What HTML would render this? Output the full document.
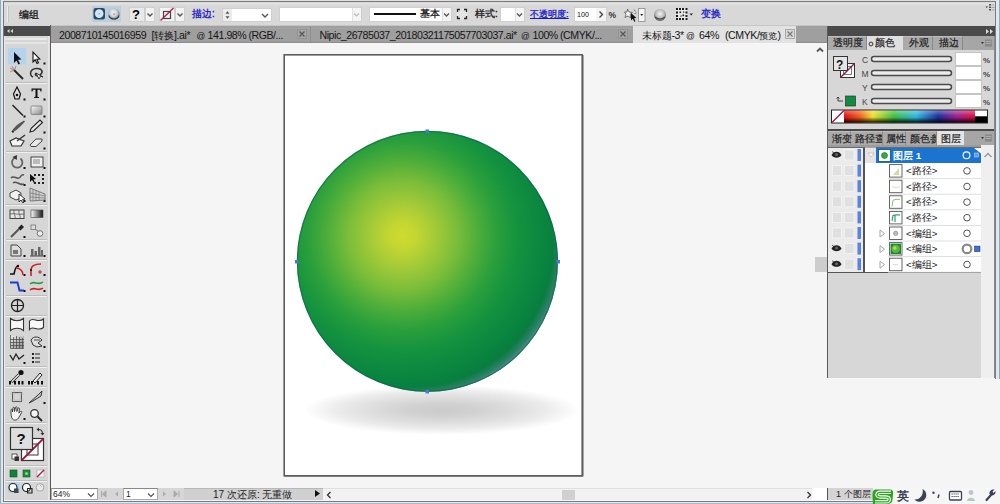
<!DOCTYPE html>
<html><head><meta charset="utf-8">
<style>
*{margin:0;padding:0;box-sizing:border-box}
html,body{width:1000px;height:504px;overflow:hidden;background:#f5f5f5;font-family:"Liberation Sans",sans-serif;position:relative}
.a{position:absolute}
.t{position:absolute;white-space:nowrap;line-height:1}
.tb{top:30.2px;font-size:10.6px;letter-spacing:-0.45px;color:#151515}
</style></head><body>
<!-- window frame -->
<div class="a" style="left:0;top:0;width:1000px;height:504px;background:#dfe8f0"></div>
<div class="a" style="left:3px;top:0;width:993px;height:1px;background:#dedede"></div>
<div class="a" style="left:0;top:0;width:1px;height:504px;background:#94aabd"></div>
<div class="a" style="left:999px;top:0;width:1px;height:379px;background:#94aabd"></div>
<div class="a" style="left:0;top:503px;width:1000px;height:1px;background:#a8bccc"></div>
<div class="a" style="left:3px;top:1px;width:993px;height:501px;background:#7c7c7c"></div>
<!-- canvas bg -->
<div class="a" style="left:4px;top:2px;width:991px;height:498.5px;background:#f5f5f5"></div>
<div class="a" style="left:995px;top:379px;width:5px;height:109px;background:#f5f5f5"></div>
<!-- control bar -->
<div class="a" style="left:4px;top:2px;width:991px;height:24px;background:#d8d8d8"></div>
<div class="a" style="left:4px;top:3px;width:991px;height:2px;background:#e0e0e0"></div>
<div class="a" style="left:4px;top:25px;width:991px;height:1px;background:#c6c6c6"></div>


<!-- control bar contents -->
<div class="a" style="left:7px;top:6px;width:2px;height:16px;background:#ececec;border-right:1px solid #c4c4c4"></div>
<div class="t" style="left:19px;top:9.5px;font-size:9.5px;color:#1a1a1a;-webkit-text-stroke:0.3px #1a1a1a">编组</div>
<div class="a" style="left:92px;top:6px;width:29px;height:16px;background:#b9d0e3"></div>
<svg class="a" style="left:92px;top:6px" width="30" height="16" viewBox="0 0 30 16">
<defs><radialGradient id="b2" cx="0.45" cy="0.4" r="0.6"><stop offset="0" stop-color="#f8f8f8"/><stop offset="0.55" stop-color="#d0d0d0"/><stop offset="1" stop-color="#6a6a6a"/></radialGradient></defs>
<rect x="1.5" y="2" width="11.5" height="11.5" rx="2.2" fill="#2e4866"/>
<circle cx="7.2" cy="7.6" r="4.3" fill="#d4e6f6"/>
<circle cx="7.2" cy="7.8" r="0.8" fill="#7a9ab0"/>
<circle cx="22" cy="8" r="5.6" fill="url(#b2)"/>
<path d="M16.8 9.5 A5.6 5.6 0 0 0 27.2 9.5" fill="none" stroke="#3a3a3a" stroke-width="1.1"/>
<circle cx="22" cy="8" r="1.2" fill="#b8b8b8"/>
</svg>
<div class="a" style="left:129px;top:7px;width:16px;height:15px;background:#e9e9e9;border:1px solid #cfcfcf"></div>
<div class="t" style="left:132px;top:8px;font-size:13px;font-weight:bold;color:#000">?</div>
<div class="a" style="left:145px;top:7px;width:10px;height:15px;background:#f2f2f2;border:1px solid #cfcfcf"></div>
<svg class="a" style="left:145px;top:7px" width="10" height="15"><path d="M2.5 6.5 L5 9 L7.5 6.5" fill="none" stroke="#555" stroke-width="1.4"/></svg>
<div class="a" style="left:159px;top:7px;width:16px;height:15px;background:#f4f4f4;border:1px solid #cfcfcf"></div>
<svg class="a" style="left:159px;top:7px" width="16" height="15"><rect x="4.5" y="4.5" width="7" height="7" fill="none" stroke="#444" stroke-width="1.2"/><path d="M1.5 13.5 L14.5 1" stroke="#b0204a" stroke-width="1.4"/></svg>
<div class="a" style="left:175px;top:7px;width:10px;height:15px;background:#f2f2f2;border:1px solid #cfcfcf"></div>
<svg class="a" style="left:175px;top:7px" width="10" height="15"><path d="M2.5 6.5 L5 9 L7.5 6.5" fill="none" stroke="#555" stroke-width="1.4"/></svg>
<div class="t" style="left:192px;top:9px;font-size:10px;color:#1a1ac4;-webkit-text-stroke:0.3px #1a1ac4">描边:</div>
<div class="a" style="left:222px;top:8px;width:50px;height:14px;background:#fff;border:1px solid #cfcfcf"></div>
<div class="a" style="left:223px;top:9px;width:9px;height:12px;background:#ececec"></div>
<svg class="a" style="left:223px;top:9px" width="9" height="12"><path d="M2.5 4.8 L4.5 2.3 L6.5 4.8 Z M2.5 7.2 L4.5 9.7 L6.5 7.2 Z" fill="#555"/></svg>
<svg class="a" style="left:260px;top:9px" width="10" height="12"><path d="M2 5 L5 8 L8 5" fill="none" stroke="#555" stroke-width="1.4"/></svg>
<div class="a" style="left:279px;top:7px;width:83px;height:15px;background:#fff;border:1px solid #cfcfcf"></div>
<div class="a" style="left:352px;top:8px;width:9px;height:13px;background:#f4f4f4;border-left:1px solid #e0e0e0"></div>
<svg class="a" style="left:352px;top:8px" width="9" height="13"><path d="M2 5.5 L4.5 8 L7 5.5" fill="none" stroke="#bbb" stroke-width="1.2"/></svg>
<div class="a" style="left:369px;top:7px;width:83px;height:15px;background:#fff;border:1px solid #cfcfcf"></div>
<div class="a" style="left:374px;top:13px;width:42px;height:2px;background:#111"></div>
<div class="t" style="left:420px;top:9px;font-size:10px;color:#1a1a1a;-webkit-text-stroke:0.3px #1a1a1a">基本</div>
<div class="a" style="left:442px;top:8px;width:9px;height:13px;background:#f4f4f4;border-left:1px solid #e0e0e0"></div>
<svg class="a" style="left:442px;top:8px" width="9" height="13"><path d="M2 5.5 L4.5 8 L7 5.5" fill="none" stroke="#555" stroke-width="1.3"/></svg>
<svg class="a" style="left:456px;top:8px" width="12" height="12"><rect x="0.5" y="0.5" width="11" height="11" fill="#ececec" opacity="0.6"/><path d="M1.5 4 L1.5 1.5 L4 1.5 M8 1.5 L10.5 1.5 L10.5 4 M10.5 8 L10.5 10.5 L8 10.5 M4 10.5 L1.5 10.5 L1.5 8" fill="none" stroke="#222" stroke-width="1.3"/></svg>
<div class="t" style="left:475px;top:9px;font-size:10px;color:#1a1a1a;-webkit-text-stroke:0.3px #1a1a1a">样式:</div>
<div class="a" style="left:500px;top:7px;width:25px;height:15px;background:#fff;border:1px solid #cfcfcf"></div>
<div class="a" style="left:515px;top:8px;width:9px;height:13px;background:#f4f4f4;border-left:1px solid #e0e0e0"></div>
<svg class="a" style="left:515px;top:8px" width="9" height="13"><path d="M2 5.5 L4.5 8 L7 5.5" fill="none" stroke="#555" stroke-width="1.3"/></svg>
<div class="t" style="left:530px;top:9px;font-size:9.4px;color:#1a1ac4;-webkit-text-stroke:0.3px #1a1ac4;text-decoration:underline">不透明度:</div>
<div class="a" style="left:574px;top:7px;width:33px;height:15px;background:#fff;border:1px solid #cfcfcf"></div>
<div class="t" style="left:577px;top:11px;font-size:7.2px;color:#111">100</div>
<div class="a" style="left:596px;top:8px;width:10px;height:13px;background:#f4f4f4"></div>
<svg class="a" style="left:596px;top:8px" width="10" height="13"><path d="M3.5 3.5 L6.5 6.5 L3.5 9.5" fill="none" stroke="#444" stroke-width="1.4"/></svg>
<div class="t" style="left:608.5px;top:10.5px;font-size:8.5px;font-weight:bold;color:#333">%</div>
<svg class="a" style="left:624px;top:7px" width="22" height="16">
<path d="M3.5 2 L5 5 L8.5 5.5 L6 7.5 L7 11 L4 9 L1 10.5 L2 7.5 L0.5 5 L3 5 Z" fill="#f4f4f4" stroke="#555" stroke-width="0.8"/>
<path d="M7 6 L7 13.5 L8.8 11.8 L10.3 14.8 L11.5 14.2 L10 11.2 L12.5 11 Z" fill="#111"/>
<path d="M10 2.5 L11.5 4.5 M12.5 6 L10.5 6.5" stroke="#666" stroke-width="0.9"/>
<rect x="14.5" y="1.5" width="6.5" height="13" fill="#f4f4f4" stroke="#8a8a8a" stroke-width="0.8"/><path d="M16.2 7 L19.3 7 L17.75 9 Z" fill="#222"/>
</svg>
<svg class="a" style="left:653px;top:8px" width="14" height="14"><defs><radialGradient id="gl" cx="0.5" cy="0.4" r="0.6"><stop offset="0" stop-color="#f4f4f4"/><stop offset="0.6" stop-color="#bbb"/><stop offset="1" stop-color="#555"/></radialGradient></defs><circle cx="7" cy="7" r="6" fill="url(#gl)"/><path d="M2 9 Q7 13 12 9" fill="none" stroke="#444" stroke-width="1.2"/></svg>
<svg class="a" style="left:675px;top:7px" width="20" height="15">
<rect x="1" y="1" width="11.5" height="12" fill="#e8e8e8"/>
<g fill="#1a1a1a"><rect x="1" y="1" width="2" height="2"/><rect x="4" y="1" width="2" height="2"/><rect x="7" y="1" width="2" height="2"/><rect x="10.5" y="1" width="2" height="2"/>
<rect x="1" y="4.5" width="2" height="2"/><rect x="10.5" y="4.5" width="2" height="2"/><rect x="1" y="8" width="2" height="2"/><rect x="10.5" y="8" width="2" height="2"/>
<rect x="1" y="11" width="2" height="2"/><rect x="4" y="11" width="2" height="2"/><rect x="7" y="11" width="2" height="2"/><rect x="10.5" y="11" width="2" height="2"/>
<rect x="4.5" y="4.5" width="1.6" height="1.6"/><rect x="7.5" y="7.5" width="1.6" height="1.6"/><rect x="5.5" y="8.5" width="1.2" height="1.2"/><rect x="8" y="4.5" width="1.2" height="1.2"/></g>
<path d="M14.5 6.5 L18 6.5 L16.25 8.5 Z" fill="#222"/>
</svg>
<div class="t" style="left:701px;top:9px;font-size:10px;color:#1a1ac4;-webkit-text-stroke:0.3px #1a1ac4">变换</div>
<svg class="a" style="left:985px;top:3px" width="10" height="9"><path d="M0.5 3.5 L3 3.5 L1.75 5 Z" fill="#333"/><g fill="#555"><rect x="4" y="1" width="2" height="1.5"/><rect x="4" y="3.5" width="2" height="1.5"/><rect x="4" y="6" width="2" height="1.5"/></g><g fill="#999"><rect x="6.5" y="1.5" width="3" height="0.8"/><rect x="6.5" y="4" width="3" height="0.8"/><rect x="6.5" y="6.5" width="3" height="0.8"/></g></svg>

<!-- doc tab bar -->
<div class="a" style="left:51px;top:26px;width:776px;height:17px;background:#9f9f9f;border-bottom:1px solid #8c8c8c"></div>
<div class="a" style="left:51px;top:28px;width:776px;height:1px;background:#a6a6a6"></div>


<!-- doc tabs -->
<div class="a" style="left:633px;top:26px;width:163px;height:17px;background:#e2e2e2"></div>
<div class="t tb" style="left:59px">2008710145016959</div>
<div class="t tb" style="left:151.6px">[<span style="font-size:9.8px;letter-spacing:0">转换</span>].ai*</div>
<div class="t tb" style="left:196.4px;font-size:8.6px;top:31.5px;letter-spacing:0">@</div>
<div class="t tb" style="left:207.6px">141.98%</div>
<div class="t tb" style="left:248.4px">(RGB/...</div>
<div class="t tb" style="left:319.5px">Nipic_26785037_20180321175057703037.ai*</div>
<div class="t tb" style="left:521px;font-size:8.6px;top:31.5px;letter-spacing:0">@</div>
<div class="t tb" style="left:532.5px">100%</div>
<div class="t tb" style="left:560px">(CMYK/...</div>
<div class="t tb" style="left:641.5px"><span style="font-size:9.8px;letter-spacing:0">未标题</span>-3*</div>
<div class="t tb" style="left:686px;font-size:8.6px;top:31.5px;letter-spacing:0">@</div>
<div class="t tb" style="left:699px">64%</div>
<div class="t tb" style="left:725px">(CMYK/<span style="font-size:9.4px;letter-spacing:0">预览</span>)</div>

<svg class="a" style="left:297px;top:29px" width="10" height="10"><rect x="0.5" y="0.5" width="9" height="9" fill="#a6a6a6" stroke="#929292"/><path d="M2.5 2.5 L7.5 7.5 M7.5 2.5 L2.5 7.5" stroke="#555" stroke-width="1.2"/></svg>
<div class="a" style="left:310px;top:27px;width:1px;height:15px;background:#8e8e8e"></div>
<svg class="a" style="left:618px;top:29px" width="10" height="10"><rect x="0.5" y="0.5" width="9" height="9" fill="#a6a6a6" stroke="#929292"/><path d="M2.5 2.5 L7.5 7.5 M7.5 2.5 L2.5 7.5" stroke="#555" stroke-width="1.2"/></svg>
<svg class="a" style="left:785px;top:29px" width="10" height="10"><rect x="0.5" y="0.5" width="9" height="9" fill="#d8d8d8" stroke="#aaa"/><path d="M2.5 2.5 L7.5 7.5 M7.5 2.5 L2.5 7.5" stroke="#777" stroke-width="1.1"/></svg>
<svg class="a" style="left:815px;top:46px" width="10" height="8"><path d="M2 5.5 L5 2.5 L8 5.5" fill="none" stroke="#555" stroke-width="1.8"/></svg>

<!-- tools panel -->
<div class="a" style="left:4px;top:25px;width:47px;height:475px;background:#d6d6d6"></div>
<div class="a" style="left:4px;top:26px;width:46px;height:10px;background:#4a4a4a"></div>
<div class="a" style="left:50px;top:25px;width:1px;height:475px;background:#5a5a5a"></div>


<!-- tools contents -->
<svg class="a" style="left:0;top:0" width="52" height="504" viewBox="0 0 52 504">
<defs>
<linearGradient id="gg" x1="0" y1="0" x2="1" y2="1"><stop offset="0" stop-color="#fafafa"/><stop offset="1" stop-color="#888"/></linearGradient>
<linearGradient id="gh" x1="0" y1="0" x2="1" y2="0"><stop offset="0" stop-color="#fff"/><stop offset="1" stop-color="#111"/></linearGradient>
</defs>
<!-- header arrows -->
<path d="M7 31 L9.5 29 L9.5 33 Z M10.5 31 L13 29 L13 33 Z" fill="#d8d8d8"/>
<!-- grip -->
<rect x="5" y="38" width="42" height="2" fill="#e8e8e8"/><rect x="5" y="42" width="42" height="2" fill="#e4e4e4"/>
<rect x="4" y="36" width="1" height="464" fill="#ececec"/>
<rect x="48" y="36" width="1.5" height="464" fill="#e6e6e6"/>
<!-- separators -->
<g fill="#bdbdbd">
<rect x="6" y="82" width="41" height="1"/><rect x="6" y="151" width="41" height="1"/><rect x="6" y="204" width="41" height="1"/>
<rect x="6" y="239" width="41" height="1"/><rect x="6" y="259" width="41" height="1"/><rect x="6" y="295" width="41" height="1"/>
<rect x="6" y="315" width="41" height="1"/><rect x="6" y="366" width="41" height="1"/><rect x="6" y="386" width="41" height="1"/>
<rect x="6" y="422" width="41" height="1"/><rect x="6" y="465" width="41" height="1"/><rect x="6" y="480" width="41" height="1"/>
</g>
<g fill="#f0f0f0">
<rect x="6" y="83" width="41" height="1"/><rect x="6" y="152" width="41" height="1"/><rect x="6" y="205" width="41" height="1"/>
<rect x="6" y="240" width="41" height="1"/><rect x="6" y="260" width="41" height="1"/><rect x="6" y="296" width="41" height="1"/>
<rect x="6" y="316" width="41" height="1"/><rect x="6" y="367" width="41" height="1"/><rect x="6" y="387" width="41" height="1"/>
<rect x="6" y="423" width="41" height="1"/><rect x="6" y="466" width="41" height="1"/><rect x="6" y="481" width="41" height="1"/>
</g>
<!-- selection highlight -->
<rect x="8" y="48" width="18" height="16.5" fill="#b6d3ee"/>
<!-- flyout dots -->
<g fill="#111">
<rect x="43.5" y="62.5" width="2" height="2"/><rect x="23.5" y="98.5" width="2" height="2"/><rect x="43.5" y="98.5" width="2" height="2"/>
<rect x="23.5" y="115.5" width="2" height="2"/><rect x="43.5" y="115.5" width="2" height="2"/><rect x="43.5" y="131.5" width="2" height="2"/>
<rect x="43.5" y="147.5" width="2" height="2"/><rect x="23.5" y="167" width="2" height="2"/><rect x="43.5" y="167" width="2" height="2"/>
<rect x="23.5" y="184" width="2" height="2"/><rect x="23.5" y="200" width="2" height="2"/><rect x="43.5" y="200" width="2" height="2"/>
<rect x="23.5" y="236" width="2" height="2"/><rect x="23.5" y="255" width="2" height="2"/><rect x="43.5" y="255" width="2" height="2"/>
<rect x="23.5" y="274" width="2" height="2"/><rect x="43.5" y="274" width="2" height="2"/><rect x="23.5" y="290" width="2" height="2"/><rect x="43.5" y="290" width="2" height="2"/>
<rect x="43.5" y="346" width="2" height="2"/><rect x="23.5" y="362" width="2" height="2"/><rect x="43.5" y="402" width="2" height="2"/><rect x="23.5" y="418" width="2" height="2"/>
</g>
<!-- selection arrow -->
<path d="M14 52 L14 63 L16.5 60.5 L18.5 64.5 L20 63.8 L18 59.8 L21.5 59.5 Z" fill="#111"/>
<!-- direct selection -->
<path d="M33 52 L33 62 L35.2 59.8 L37 63.5 L38.5 62.8 L36.8 59.2 L39.8 59 Z" fill="#fff" stroke="#111" stroke-width="1.1"/>
<!-- magic wand -->
<path d="M14 70 L23 79" stroke="#222" stroke-width="1.8"/><path d="M10 68 L14 70 M12 66 L14 70 M16 66 L14.5 70 M10 72 L14 70" stroke="#a07070" stroke-width="0.8"/>
<!-- lasso -->
<path d="M33 77 C29 75 30 69 36 68.5 C42 68 44 72 40 75 C37 77 34 75 36 73" fill="none" stroke="#333" stroke-width="1.5"/><path d="M36 73 L39 79 L40.5 76 L43 77 Z" fill="#fff" stroke="#222" stroke-width="0.9"/>
<!-- pen -->
<path d="M17 87 L13.5 94 L15 99 L19 99 L20.5 94 Z" fill="#ddd" stroke="#111" stroke-width="1.2"/><circle cx="17" cy="95" r="1.3" fill="#111"/>
<!-- type -->
<path d="M31.5 88.5 L41.5 88.5 L41.5 91.5 L40.5 91.5 L40 89.8 L37.5 89.8 L37.5 96.8 L39 97.3 L39 98 L34 98 L34 97.3 L35.5 96.8 L35.5 89.8 L33 89.8 L32.5 91.5 L31.5 91.5 Z" fill="#111"/>
<!-- line -->
<path d="M12.5 105 L23 115.5" stroke="#222" stroke-width="1.5"/>
<!-- rect -->
<rect x="31" y="106" width="11" height="8.5" rx="1" fill="url(#gg)" stroke="#777" stroke-width="0.8"/>
<!-- brush -->
<path d="M12 131 C14 127 18 124 24 120.5 L25 121.5 C21 126 17 130 13 132 Z" fill="#555"/><path d="M12 131 L13.5 132.5" stroke="#222" stroke-width="1.6"/>
<!-- pencil -->
<path d="M30 132 L31 128.5 L40 120 L42.5 122.5 L33.5 131 Z" fill="#e8e8e8" stroke="#222" stroke-width="1.1"/>
<!-- blob brush -->
<path d="M10 141 L16 138 L24 141 L21 146 L12 146 Z" fill="#f4f4f4" stroke="#333" stroke-width="1.2"/><path d="M17 141 L25 135" stroke="#333" stroke-width="1.4"/>
<!-- eraser -->
<path d="M30 145 L36 139 L42 139 L42 141 L36 146.5 L31 146.5 Z" fill="#e8e8e8" stroke="#444" stroke-width="1"/>
<!-- rotate -->
<path d="M15 157.8 A5.2 5.2 0 1 0 20.5 158.5" fill="none" stroke="#666" stroke-width="1.8"/><path d="M12.5 157 L17 155 L16.8 160 Z" fill="#333"/>
<!-- scale -->
<rect x="31" y="157" width="12" height="10" fill="#eee" stroke="#444" stroke-width="1"/><rect x="33" y="159" width="7" height="5" fill="#bbb"/>
<!-- warp -->
<path d="M11 178 C14 174 18 182 21 176 C22 174 24 175 24 175 M13 183 C16 180 20 186 24 184" fill="none" stroke="#555" stroke-width="1.6"/>
<!-- free transform -->
<g fill="#222"><rect x="34" y="174" width="2" height="2"/><rect x="38" y="174" width="2" height="2"/><rect x="42" y="174" width="2" height="2"/><rect x="42" y="178" width="2" height="2"/><rect x="42" y="182" width="2" height="2"/><rect x="38" y="182" width="2" height="2"/><rect x="34" y="182" width="2" height="2"/></g><path d="M30 174 L30 182 L32 180 L34 183 L35 182.5 L33.5 179.5 L36 179 Z" fill="#111"/>
<!-- shape builder -->
<path d="M10 193 L16 190 L21 193 L21 198 L16 200 L10 197 Z" fill="#f2f2f2" stroke="#444" stroke-width="1"/><path d="M19 194 L19 202 L21 200 L23 203 L24 202 L22.5 199.5 L25 199 Z" fill="#fff" stroke="#222" stroke-width="0.9"/>
<!-- perspective grid -->
<path d="M30 188 L30 201 L45 200 L45 194 Z" fill="#cfcfcf" stroke="#666" stroke-width="0.8"/><path d="M33 189 L33 201 M36 190 L36 201 M39 192 L39 200.5 M30 193 L45 196 M30 197 L45 198" stroke="#777" stroke-width="0.7"/>
<!-- mesh -->
<rect x="10" y="210" width="14" height="8.5" fill="#e4e4e4" stroke="#444" stroke-width="1"/><path d="M14 210 C13 214 16 215 15 218.5 M19 210 C18 214 21 215 20 218.5 M10 214 C14 213 18 215 24 214" fill="none" stroke="#555" stroke-width="0.8"/>
<!-- gradient -->
<rect x="31" y="210" width="12" height="7.5" fill="url(#gh)" stroke="#555" stroke-width="0.7"/>
<!-- eyedropper -->
<path d="M11 237 L19 229" stroke="#555" stroke-width="2"/><path d="M18 228 L21.5 224.5 L24 227 L20.5 230.5 Z" fill="#222"/>
<!-- blend -->
<rect x="31" y="225" width="4.5" height="4.5" fill="#ddd" stroke="#666" stroke-width="0.7"/><circle cx="40" cy="233.5" r="2.8" fill="#eee" stroke="#555" stroke-width="0.8"/><path d="M35 229 L38 231" stroke="#777" stroke-width="1"/>
<!-- symbol sprayer -->
<path d="M11 245 L17 245 L21 249 L21 256 L11 256 Z" fill="#ddd" stroke="#444" stroke-width="1"/><rect x="13" y="250" width="5" height="4" fill="#777"/>
<!-- graph -->
<path d="M30 256 L43 256" stroke="#444" stroke-width="1"/><g fill="#666"><rect x="31" y="249" width="2.5" height="7"/><rect x="34.5" y="251" width="2.5" height="5"/><rect x="38" y="247" width="2.5" height="9"/><rect x="41" y="250" width="2" height="6"/></g>
<!-- anchor tools (red/black) -->
<path d="M10 274 L14 274 C15 269 16 266 18 266" fill="none" stroke="#111" stroke-width="1.6"/><path d="M16 268 C20 268 23 271 23 275" fill="none" stroke="#d02020" stroke-width="1.6"/><circle cx="18" cy="266" r="1.2" fill="#111"/>
<path d="M31 276 L31 270 C31 266 35 264 41 264" fill="none" stroke="#d02020" stroke-width="1.6"/><path d="M38 272 L42 272 M40 270 L40 274" stroke="#d02020" stroke-width="1"/><circle cx="31" cy="270" r="1" fill="#111"/>
<path d="M10 282.5 L17.5 282.5 L19.5 290.5 L24 290.5" fill="none" stroke="#1a3ad0" stroke-width="1.9"/>
<path d="M30 284 C34 280 38 286 43 282" fill="none" stroke="#20a040" stroke-width="1.6"/><path d="M30 290 C34 286 38 292 43 288" fill="none" stroke="#d02020" stroke-width="1.6"/>
<!-- crosshair -->
<circle cx="17.5" cy="305.5" r="6" fill="none" stroke="#222" stroke-width="1.3"/><path d="M11.5 305.5 L23.5 305.5 M17.5 299.5 L17.5 311.5" stroke="#222" stroke-width="1.2"/>
<!-- envelope 1 -->
<path d="M10.5 318.5 C14 321.5 20 321.5 23.5 318.5 L23.5 330.5 C20 327.5 14 327.5 10.5 330.5 Z" fill="#f8f8f8" stroke="#333" stroke-width="1.1"/>
<!-- envelope 2 -->
<path d="M29.5 321 C33 316 38 324 43.5 319 L43.5 327.5 C38 332.5 33 324.5 29.5 329.5 Z" fill="#f8f8f8" stroke="#333" stroke-width="1.1"/>
<!-- mesh grid -->
<defs><linearGradient id="mg" x1="0" y1="0" x2="1" y2="1"><stop offset="0" stop-color="#fff"/><stop offset="1" stop-color="#555"/></linearGradient></defs>
<rect x="10" y="336" width="14" height="12" fill="url(#mg)" opacity="0.6"/>
<g stroke="#444" stroke-width="0.7" fill="none"><path d="M10.5 335 L10.5 348.5 L24 348.5 M13.5 337 L13.5 348.5 M16.5 336 L16.5 348.5 M19.5 337 L19.5 348.5 M22.5 338 L22.5 348.5 M10.5 339.5 L24 339.5 M10.5 342.5 L24 342.5 M10.5 345.5 L24 345.5"/></g>
<!-- live paint -->
<path d="M31 340 C33 336 39 336 42 340 L38 343 L42 346 L37 347 L33 345 Z" fill="#ddd" stroke="#333" stroke-width="1"/><path d="M34 340 L40 340" stroke="#666" stroke-width="1.2"/>
<!-- wavy path -->
<path d="M10 355 L13 360 L16 354 L19 359 L24 355" fill="none" stroke="#222" stroke-width="1.3"/>
<!-- list -->
<g fill="#222"><rect x="32" y="353" width="2" height="2"/><rect x="32" y="357" width="2" height="2"/><rect x="32" y="361" width="2" height="2"/><rect x="35" y="353.5" width="5" height="1"/><rect x="35" y="357.5" width="5" height="1"/><rect x="35" y="361.5" width="5" height="1"/></g>
<!-- measure eyedroppers -->
<path d="M11.5 382 L19 374.5" stroke="#222" stroke-width="2.6"/><path d="M11.8 381.7 L19 374.5" stroke="#fff" stroke-width="1.1"/><circle cx="21" cy="372.5" r="2.6" fill="#111"/>
<g fill="#111"><rect x="9" y="381" width="2" height="3.5"/><rect x="14" y="381" width="2" height="3.5"/><rect x="18" y="381" width="2" height="3.5"/><rect x="21.5" y="381" width="2" height="3.5"/></g>
<path d="M33 381 L40 373 L42 375 L35 383 Z" fill="#eee" stroke="#222" stroke-width="1"/>
<g fill="#111"><rect x="28" y="381" width="2" height="3.5"/><rect x="31" y="381" width="2" height="3.5"/><rect x="37" y="381" width="2" height="3.5"/><rect x="41" y="381" width="2" height="3.5"/></g>
<!-- slice -->
<rect x="12.5" y="392.5" width="9" height="9" fill="none" stroke="#555" stroke-width="1"/><path d="M10 394 L24 394 M10 400 L24 400 M14 390 L14 404 M20 390 L20 404" stroke="#bbb" stroke-width="0.6"/>
<!-- knife -->
<path d="M29 403 L38 395 L42 391 L41 396 L33 401 Z" fill="#ccc" stroke="#333" stroke-width="1"/>
<!-- hand -->
<path d="M11 413 L11 410 C11 409 12.5 409 12.5 410 L12.5 412 L13 408 C13 407 14.5 407 14.5 408 L14.5 411.5 L15.5 407.5 C15.5 406.5 17 406.5 17 407.5 L16.8 411.5 L18 408.5 C18.2 407.5 19.7 407.8 19.5 408.8 L18.8 413 L20.5 411.5 C21.3 410.8 22.3 411.8 21.6 412.6 L18.5 418 C17.5 420 15 420.5 13.5 419.8 C11.8 419 11 416 11 413 Z" fill="#f4f4f4" stroke="#333" stroke-width="0.9"/>
<!-- zoom -->
<circle cx="34.5" cy="413.5" r="3.8" fill="#f4f4f4" stroke="#333" stroke-width="1.3"/><path d="M37.5 416.5 L42 421" stroke="#222" stroke-width="1.8"/>
<!-- swap arrow -->
<path d="M38.5 429.5 C41.5 429.5 42.5 430.5 42.5 433.5" fill="none" stroke="#333" stroke-width="1.1"/><path d="M36.5 429.5 L39 427.5 L39 431.5 Z M42.5 435.5 L40.5 433 L44.5 433 Z" fill="#333"/>
<!-- stroke box -->
<rect x="21.5" y="438.5" width="22" height="22" fill="#fff" stroke="#333" stroke-width="1.2"/>
<rect x="27" y="444" width="11" height="11" fill="none" stroke="#333" stroke-width="1"/>
<path d="M22 460 L43 439" stroke="#a01a40" stroke-width="1.8"/>
<!-- fill box -->
<rect x="10.5" y="427.5" width="22" height="22" fill="#dedede" stroke="#333" stroke-width="1.2"/>
<text x="16.5" y="444" font-family="Liberation Sans" font-size="15" font-weight="bold" fill="#111">?</text>
<!-- default -->
<rect x="12" y="454" width="5" height="5" fill="#fff" stroke="#333" stroke-width="0.8"/><rect x="14.5" y="456.5" width="4.5" height="4.5" fill="#333"/>
<!-- color modes -->
<rect x="10" y="470" width="7" height="7" fill="#13803a" stroke="#0a5a28" stroke-width="0.6"/>
<rect x="23" y="470" width="7" height="7" fill="#1e8a3e" stroke="#0a5a28" stroke-width="0.6"/><circle cx="26.5" cy="473.5" r="1.6" fill="#8cd080"/>
<rect x="37" y="470" width="7" height="7" fill="#fff" stroke="#999" stroke-width="0.6"/><path d="M37 477 L44 470" stroke="#b01a40" stroke-width="1.4"/>
<!-- draw modes -->
<rect x="8" y="482" width="12" height="11" fill="#b6d3ee"/>
<circle cx="13" cy="487.5" r="4" fill="#fff" stroke="#222" stroke-width="1.2"/><rect x="14" y="488.5" width="4.5" height="4.5" fill="#444"/>
<circle cx="26.5" cy="487.5" r="4" fill="#fff" stroke="#222" stroke-width="1.2"/><path d="M27.5 488.5 L32 488.5 L32 493 L27.5 493 Z" fill="none" stroke="#222" stroke-width="1.1"/>
<circle cx="40" cy="487.5" r="3.8" fill="#e8e8e8" stroke="#aaa" stroke-width="1"/><path d="M40 485 L42 487" stroke="#bbb" stroke-width="1"/>
</svg>

<!-- right panel dock -->
<div class="a" style="left:827px;top:25px;width:168px;height:353px;background:#d6d6d6"></div>
<div class="a" style="left:827px;top:26px;width:168px;height:10px;background:#4a4a4a"></div>


<!-- right panel contents -->
<div class="a" style="left:827px;top:26px;width:1px;height:352px;background:#5a5a5a"></div>
<svg class="a" style="left:985px;top:28px" width="10" height="7"><path d="M1 1 L4 3.5 L1 6 Z M5 1 L8 3.5 L5 6 Z" fill="#ddd"/></svg>
<!-- color panel tabs -->
<div class="a" style="left:828px;top:36px;width:167px;height:14px;background:#a6a6a6"></div>
<div class="a" style="left:828px;top:36px;width:39px;height:14px;background:#aaaaaa;border-right:1px solid #8a8a8a;border-top:1px solid #bdbdbd"></div>
<div class="a" style="left:867px;top:36px;width:36px;height:14px;background:#dfdfdf"></div>
<div class="a" style="left:903px;top:36px;width:30px;height:14px;background:#aaaaaa;border-right:1px solid #8a8a8a;border-top:1px solid #bdbdbd"></div>
<div class="a" style="left:933px;top:36px;width:30px;height:14px;background:#aaaaaa;border-right:1px solid #8a8a8a;border-top:1px solid #bdbdbd"></div>
<div class="t" style="left:833px;top:38px;font-size:10px;color:#222;-webkit-text-stroke:0.2px #222">透明度</div>
<svg class="a" style="left:868px;top:41px" width="6" height="6"><circle cx="3" cy="3" r="1.9" fill="none" stroke="#333" stroke-width="1"/></svg><div class="t" style="left:875px;top:38px;font-size:10px;color:#222;-webkit-text-stroke:0.2px #222">颜色</div>
<div class="t" style="left:909px;top:38px;font-size:10px;color:#222;-webkit-text-stroke:0.2px #222">外观</div>
<div class="t" style="left:939px;top:38px;font-size:10px;color:#222;-webkit-text-stroke:0.2px #222">描边</div>
<svg class="a" style="left:980px;top:38px" width="14" height="10"><path d="M1 4 L4 4 L2.5 6 Z" fill="#333"/><rect x="5" y="1.5" width="7" height="7" fill="#888"/><path d="M5.5 3.5 L11.5 3.5 M5.5 5.5 L11.5 5.5" stroke="#bbb" stroke-width="0.7"/></svg>
<!-- color panel body -->
<div class="a" style="left:828px;top:50px;width:167px;height:79px;background:#d7d7d7"></div>
<svg class="a" style="left:828px;top:50px" width="167" height="80" viewBox="828 50 167 80">
<rect x="840.5" y="63.5" width="14" height="14" fill="#fff" stroke="#333" stroke-width="1"/>
<rect x="843.5" y="66.5" width="8" height="8" fill="none" stroke="#555" stroke-width="0.8"/>
<path d="M840.5 77.5 L854.5 63.5" stroke="#a01a40" stroke-width="1.5"/>
<rect x="833.5" y="56.5" width="14" height="14" fill="#e4e4e4" stroke="#333" stroke-width="1"/>
<text x="836" y="68.5" font-family="Liberation Sans" font-size="12" font-weight="bold" fill="#111">?</text>
<path d="M838 97 L838 101 L843 101 M836.5 98.5 L838 97 L839.5 98.5" fill="none" stroke="#333" stroke-width="0.9"/>
<rect x="845.5" y="96" width="10" height="10" fill="#138a44" stroke="#333" stroke-width="0.7"/>
<g font-family="Liberation Sans" font-size="8.5" fill="#444">
<text x="862" y="62.5">C</text><text x="861.5" y="76.5">M</text><text x="862" y="90.5">Y</text><text x="862" y="104.5">K</text>
</g>
<g fill="#ececec" stroke="#4a4a4a" stroke-width="1.5">
<rect x="871.5" y="56.5" width="80" height="5" rx="2.5"/><rect x="871.5" y="70.5" width="80" height="5" rx="2.5"/>
<rect x="871.5" y="84.5" width="80" height="5" rx="2.5"/><rect x="871.5" y="98.5" width="80" height="5" rx="2.5"/>
</g>
<g fill="#fff" stroke="#c4c4c4" stroke-width="1">
<rect x="955.5" y="52.5" width="26" height="13"/><rect x="955.5" y="66.5" width="26" height="13"/>
<rect x="955.5" y="80.5" width="26" height="13"/><rect x="955.5" y="94.5" width="26" height="13"/>
</g>
<g font-family="Liberation Sans" font-size="8" font-weight="bold" fill="#444">
<text x="983" y="63">%</text><text x="983" y="77">%</text><text x="983" y="91">%</text><text x="983" y="105">%</text>
</g>
<defs>
<linearGradient id="spec" x1="0" y1="0" x2="1" y2="0">
<stop offset="0" stop-color="#e01010"/><stop offset="0.12" stop-color="#f06020"/><stop offset="0.22" stop-color="#f0e030"/>
<stop offset="0.38" stop-color="#40c040"/><stop offset="0.55" stop-color="#30b8e0"/><stop offset="0.72" stop-color="#2030a0"/>
<stop offset="0.86" stop-color="#a02090"/><stop offset="1" stop-color="#e01040"/>
</linearGradient>
<linearGradient id="specv" x1="0" y1="0" x2="0" y2="1">
<stop offset="0" stop-color="#fff" stop-opacity="0.35"/><stop offset="0.45" stop-color="#fff" stop-opacity="0"/>
<stop offset="0.55" stop-color="#000" stop-opacity="0"/><stop offset="1" stop-color="#000" stop-opacity="0.9"/>
</linearGradient>
</defs>
<rect x="831" y="109.5" width="157" height="14" fill="#222"/>
<rect x="832" y="110.5" width="12" height="12" fill="#fff"/>
<path d="M832 122.5 L844 110.5" stroke="#a01a40" stroke-width="1.4"/>
<rect x="844" y="110.5" width="131" height="12" fill="url(#spec)"/>
<rect x="844" y="110.5" width="131" height="12" fill="url(#specv)"/>
<rect x="975" y="110.5" width="12" height="6" fill="#fff"/>
<rect x="975" y="116.5" width="12" height="6" fill="#000"/>
</svg>
<div class="a" style="left:828px;top:129px;width:167px;height:2px;background:#4a4a4a"></div>


<!-- layers panel -->
<div class="a" style="left:828px;top:131px;width:167px;height:14px;background:#a6a6a6"></div>
<div class="a" style="left:828px;top:131px;width:23px;height:14px;background:#aaaaaa;border-right:1px solid #8a8a8a;border-top:1px solid #bdbdbd"></div>
<div class="a" style="left:851px;top:131px;width:32px;height:14px;background:#aaaaaa;border-right:1px solid #8a8a8a;border-top:1px solid #bdbdbd"></div>
<div class="a" style="left:883px;top:131px;width:23px;height:14px;background:#aaaaaa;border-right:1px solid #8a8a8a;border-top:1px solid #bdbdbd"></div>
<div class="a" style="left:906px;top:131px;width:31px;height:14px;background:#aaaaaa;border-right:1px solid #8a8a8a;border-top:1px solid #bdbdbd"></div>
<div class="a" style="left:937px;top:131px;width:27px;height:14px;background:#e4e4e4"></div>
<div class="t" style="left:832px;top:134px;font-size:10px;color:#222;-webkit-text-stroke:0.2px #222">渐变</div>
<div class="t" style="left:855px;top:134px;font-size:10px;color:#222;-webkit-text-stroke:0.2px #222;width:27px;overflow:hidden">路径查</div>
<div class="t" style="left:886px;top:134px;font-size:10px;color:#222;-webkit-text-stroke:0.2px #222">属性</div>
<div class="t" style="left:910px;top:134px;font-size:10px;color:#222;-webkit-text-stroke:0.2px #222;width:26px;overflow:hidden">颜色参</div>
<div class="t" style="left:941px;top:134px;font-size:10px;color:#222;-webkit-text-stroke:0.2px #222">图层</div>
<svg class="a" style="left:980px;top:133px" width="14" height="10"><path d="M1 4 L4 4 L2.5 6 Z" fill="#333"/><rect x="5" y="1.5" width="7" height="7" fill="#888"/><path d="M5.5 3.5 L11.5 3.5 M5.5 5.5 L11.5 5.5" stroke="#bbb" stroke-width="0.7"/></svg>
<div class="a" style="left:828px;top:145px;width:167px;height:127px;background:#fff"></div>
<div class="a" style="left:828px;top:145px;width:36px;height:127px;background:#ebebeb"></div>
<div class="a" style="left:863px;top:145px;width:1.5px;height:127px;background:#555"></div>
<div class="a" style="left:981px;top:145px;width:14px;height:233px;background:#efefef"></div>
<div class="a" style="left:828px;top:145px;width:153px;height:2px;background:#9c9c9c"></div><div class="a" style="left:828px;top:146.5px;width:153px;height:1px;background:#6a6a6a"></div>
<svg class="a" style="left:983px;top:151px" width="10" height="8"><path d="M1.5 6 L5 2.5 L8.5 6" fill="none" stroke="#999" stroke-width="1.4"/></svg>
<div class="a" style="left:828px;top:272px;width:153px;height:1.5px;background:#555"></div>
<div class="a" style="left:828px;top:273px;width:153px;height:105px;background:#d7d7d7"></div>
<div class="a" style="left:994px;top:36px;width:1px;height:342px;background:#8a8a8a"></div>
<svg class="a" style="left:828px;top:145px" width="167" height="128" viewBox="828 145 167 128">
<path d="M831.5 155.0 C833.5 150.5 839.5 150.5 841.5 155.0 C839.5 158.5 833.5 158.5 831.5 155.0 Z" fill="#222"/><circle cx="836.5" cy="154.5" r="1.5" fill="#666"/><path d="M832 151.5 L834 153.0" stroke="#333" stroke-width="0.8"/>
<rect x="844.5" y="150.0" width="9.5" height="10" fill="#e0e0e0" stroke="#f4f4f4" stroke-width="0.8"/>
<rect x="857.5" y="149.0" width="3.5" height="12" fill="#5a82e0"/>
<rect x="888" y="178.2" width="93" height="0.8" fill="#d8d8d8"/>
<rect x="832.5" y="165.6" width="9" height="10" fill="#e0e0e0" stroke="#f4f4f4" stroke-width="0.8"/>
<rect x="844.5" y="165.6" width="9.5" height="10" fill="#e0e0e0" stroke="#f4f4f4" stroke-width="0.8"/>
<rect x="857.5" y="164.6" width="3.5" height="12" fill="#5a82e0"/>
<rect x="888" y="193.8" width="93" height="0.8" fill="#d8d8d8"/>
<rect x="832.5" y="181.2" width="9" height="10" fill="#e0e0e0" stroke="#f4f4f4" stroke-width="0.8"/>
<rect x="844.5" y="181.2" width="9.5" height="10" fill="#e0e0e0" stroke="#f4f4f4" stroke-width="0.8"/>
<rect x="857.5" y="180.2" width="3.5" height="12" fill="#5a82e0"/>
<rect x="888" y="209.4" width="93" height="0.8" fill="#d8d8d8"/>
<rect x="832.5" y="196.8" width="9" height="10" fill="#e0e0e0" stroke="#f4f4f4" stroke-width="0.8"/>
<rect x="844.5" y="196.8" width="9.5" height="10" fill="#e0e0e0" stroke="#f4f4f4" stroke-width="0.8"/>
<rect x="857.5" y="195.8" width="3.5" height="12" fill="#5a82e0"/>
<rect x="888" y="225.0" width="93" height="0.8" fill="#d8d8d8"/>
<rect x="832.5" y="212.4" width="9" height="10" fill="#e0e0e0" stroke="#f4f4f4" stroke-width="0.8"/>
<rect x="844.5" y="212.4" width="9.5" height="10" fill="#e0e0e0" stroke="#f4f4f4" stroke-width="0.8"/>
<rect x="857.5" y="211.4" width="3.5" height="12" fill="#5a82e0"/>
<rect x="888" y="240.6" width="93" height="0.8" fill="#d8d8d8"/>
<rect x="832.5" y="228.0" width="9" height="10" fill="#e0e0e0" stroke="#f4f4f4" stroke-width="0.8"/>
<rect x="844.5" y="228.0" width="9.5" height="10" fill="#e0e0e0" stroke="#f4f4f4" stroke-width="0.8"/>
<rect x="857.5" y="227.0" width="3.5" height="12" fill="#5a82e0"/>
<rect x="888" y="256.2" width="93" height="0.8" fill="#d8d8d8"/>
<path d="M831.5 248.6 C833.5 244.1 839.5 244.1 841.5 248.6 C839.5 252.1 833.5 252.1 831.5 248.6 Z" fill="#222"/><circle cx="836.5" cy="248.1" r="1.5" fill="#666"/><path d="M832 245.1 L834 246.6" stroke="#333" stroke-width="0.8"/>
<rect x="844.5" y="243.6" width="9.5" height="10" fill="#e0e0e0" stroke="#f4f4f4" stroke-width="0.8"/>
<rect x="857.5" y="242.6" width="3.5" height="12" fill="#5a82e0"/>
<rect x="888" y="271.8" width="93" height="0.8" fill="#d8d8d8"/>
<path d="M831.5 264.2 C833.5 259.7 839.5 259.7 841.5 264.2 C839.5 267.7 833.5 267.7 831.5 264.2 Z" fill="#222"/><circle cx="836.5" cy="263.7" r="1.5" fill="#666"/><path d="M832 260.7 L834 262.2" stroke="#333" stroke-width="0.8"/>
<rect x="844.5" y="259.2" width="9.5" height="10" fill="#e0e0e0" stroke="#f4f4f4" stroke-width="0.8"/>
<rect x="857.5" y="258.2" width="3.5" height="12" fill="#5a82e0"/>
<rect x="865" y="147.5" width="11" height="15.6" fill="#e4e4e4"/>
<path d="M868 153.0 L874 153.0 L871 157.0 Z" fill="#fff" stroke="#bbb" stroke-width="0.8"/>
<path d="M876 148.0 L974 148.0 L981 153.5 L981 163.1 L876 163.1 Z" fill="#1a74d0"/>
<rect x="878.5" y="149.5" width="12" height="12" fill="#fff" stroke="#0a4a90" stroke-width="0.8"/>
<circle cx="884.5" cy="155.5" r="3" fill="#3aaa3a" stroke="#1a6a1a" stroke-width="0.6"/>
<circle cx="966.5" cy="155.3" r="3.4" fill="none" stroke="#fff" stroke-width="1.1"/>
<rect x="974.5" y="153.0" width="4" height="4" fill="#6a9ae0" stroke="#b4ccf0" stroke-width="0.6"/>
<rect x="889.5" y="164.6" width="12.5" height="12.5" fill="#fff" stroke="#555" stroke-width="0.9"/>
<circle cx="967" cy="170.9" r="3.3" fill="#fff" stroke="#555" stroke-width="1"/>
<rect x="889.5" y="180.2" width="12.5" height="12.5" fill="#fff" stroke="#555" stroke-width="0.9"/>
<circle cx="967" cy="186.5" r="3.3" fill="#fff" stroke="#555" stroke-width="1"/>
<rect x="889.5" y="195.8" width="12.5" height="12.5" fill="#fff" stroke="#555" stroke-width="0.9"/>
<circle cx="967" cy="202.1" r="3.3" fill="#fff" stroke="#555" stroke-width="1"/>
<rect x="889.5" y="211.4" width="12.5" height="12.5" fill="#fff" stroke="#555" stroke-width="0.9"/>
<circle cx="967" cy="217.7" r="3.3" fill="#fff" stroke="#555" stroke-width="1"/>
<path d="M880 230.0 L884.5 233.5 L880 237.0 Z" fill="#fff" stroke="#a0a8b2" stroke-width="1"/>
<rect x="889.5" y="227.0" width="12.5" height="12.5" fill="#fff" stroke="#555" stroke-width="0.9"/>
<circle cx="967" cy="233.3" r="3.3" fill="#fff" stroke="#555" stroke-width="1"/>
<path d="M880 245.6 L884.5 249.1 L880 252.6 Z" fill="#fff" stroke="#a0a8b2" stroke-width="1"/>
<rect x="889.5" y="242.6" width="12.5" height="12.5" fill="#fff" stroke="#555" stroke-width="0.9"/>
<circle cx="967" cy="248.9" r="3.3" fill="#fff" stroke="#555" stroke-width="1"/>
<path d="M880 261.2 L884.5 264.7 L880 268.2 Z" fill="#fff" stroke="#a0a8b2" stroke-width="1"/>
<rect x="889.5" y="258.2" width="12.5" height="12.5" fill="#fff" stroke="#555" stroke-width="0.9"/>
<circle cx="967" cy="264.5" r="3.3" fill="#fff" stroke="#555" stroke-width="1"/>
<path d="M893 175.1 L899 168.1 L899 175.1 Z" fill="#cde0a0"/>
<path d="M892 186.7 Q896 188.7 900 186.7" fill="none" stroke="#cde0b0" stroke-width="0.8"/>
<path d="M892 206.3 L893 200.3 L896 199.3 L900 199.3" fill="none" stroke="#80c080" stroke-width="1"/>
<path d="M892 220.9 L893 215.4 L896 214.9 L900 214.9 M895 214.9 L895 221.9" fill="none" stroke="#30a070" stroke-width="1.2"/>
<circle cx="895.7" cy="233.3" r="2.2" fill="#bbb" stroke="#888" stroke-width="0.6"/>
<rect x="890.5" y="243.6" width="10.5" height="10.5" fill="#1a8a3a"/><circle cx="895.7" cy="248.9" r="4.2" fill="#5ab83a"/><circle cx="894.8" cy="248.1" r="1.8" fill="#b8d840"/>
<path d="M893 264.7 L898 264.7" stroke="#ccc" stroke-width="0.8"/>
<circle cx="967" cy="248.9" r="4.3" fill="#fff" stroke="#888" stroke-width="2.2"/>
<rect x="974.5" y="246.1" width="5.5" height="5.5" fill="#3a70d8" stroke="#223a80" stroke-width="0.6"/>
</svg>
<div class="t" style="left:893px;top:150.5px;font-size:9.8px;font-weight:bold;color:#fff">图层 1</div>
<div class="t" style="left:906px;top:166.1px;font-size:9.7px;color:#222">&lt;路径&gt;</div>
<div class="t" style="left:906px;top:181.7px;font-size:9.7px;color:#222">&lt;路径&gt;</div>
<div class="t" style="left:906px;top:197.3px;font-size:9.7px;color:#222">&lt;路径&gt;</div>
<div class="t" style="left:906px;top:212.9px;font-size:9.7px;color:#222">&lt;路径&gt;</div>
<div class="t" style="left:906px;top:228.5px;font-size:9.7px;color:#222">&lt;编组&gt;</div>
<div class="t" style="left:906px;top:244.1px;font-size:9.7px;color:#222">&lt;编组&gt;</div>
<div class="t" style="left:906px;top:259.7px;font-size:9.7px;color:#222">&lt;编组&gt;</div>
<div class="a" style="left:815px;top:257px;width:11.5px;height:15px;background:#cdcdcd"></div>

<!-- artboard -->
<svg class="a" style="left:280px;top:50px" width="310" height="430"><rect x="4.2" y="4.8" width="298" height="421" fill="#fff" stroke="#5c5c5c" stroke-width="1.6"/><path d="M303.2 5 L303.2 426.2 L4.5 426.2" fill="none" stroke="#666" stroke-width="0.8"/></svg>


<!-- shadow + sphere -->
<svg class="a" style="left:0;top:0" width="1000" height="504" viewBox="0 0 1000 504">
<defs>
<radialGradient id="sh" gradientUnits="userSpaceOnUse" cx="442" cy="410" r="138" gradientTransform="translate(442 410) scale(1 0.18) translate(-442 -410)">
<stop offset="0" stop-color="#cbcbcb"/>
<stop offset="0.25" stop-color="#d1d1d1"/>
<stop offset="0.5" stop-color="#dddddd"/>
<stop offset="0.75" stop-color="#ebebeb"/>
<stop offset="0.9" stop-color="#f7f7f7"/>
<stop offset="1" stop-color="#ffffff"/>
</radialGradient>
<radialGradient id="sp" gradientUnits="userSpaceOnUse" cx="402.5" cy="235.5" r="166">
<stop offset="0" stop-color="#cedb30"/>
<stop offset="0.08" stop-color="#c4d632"/>
<stop offset="0.2" stop-color="#a2ca38"/>
<stop offset="0.33" stop-color="#7abd3a"/>
<stop offset="0.45" stop-color="#4eae3a"/>
<stop offset="0.57" stop-color="#2a9f3c"/>
<stop offset="0.7" stop-color="#14923f"/>
<stop offset="0.85" stop-color="#0a8640"/>
<stop offset="1" stop-color="#06763e"/>
</radialGradient>
<radialGradient id="rim" gradientUnits="userSpaceOnUse" cx="412" cy="246" r="151.5">
<stop offset="0.93" stop-color="#5a8a98" stop-opacity="0"/>
<stop offset="0.98" stop-color="#5a8a98" stop-opacity="0.5"/>
<stop offset="1" stop-color="#7098a8" stop-opacity="0.7"/>
</radialGradient>
</defs>
<ellipse cx="442" cy="410" rx="138" ry="24.9" fill="url(#sh)"/>
<circle cx="427.4" cy="261.3" r="130.5" fill="url(#sp)"/>
<circle cx="427.4" cy="261.3" r="130.5" fill="url(#rim)"/>
<circle cx="427.4" cy="261.3" r="130" fill="none" stroke="#0a6050" stroke-opacity="0.6" stroke-width="1.2"/>
<rect x="425.5" y="129.5" width="3.5" height="3.5" fill="#4a78d8"/>
<rect x="295" y="260" width="3.5" height="3.5" fill="#4a78d8"/>
<rect x="556.5" y="260" width="3.5" height="3.5" fill="#4a78d8"/>
<rect x="425.5" y="390" width="3.5" height="3.5" fill="#4a78d8"/>
</svg>

<!-- status bar -->
<div class="a" style="left:51px;top:488px;width:944px;height:12px;background:#efefef"></div>
<div class="a" style="left:51px;top:488px;width:47px;height:12px;background:#fff;border:1px solid #aaa;border-top-color:#888"></div>
<div class="t" style="left:53px;top:490px;font-size:8.5px;color:#222">64%</div>
<svg class="a" style="left:86px;top:489.5px" width="10" height="10"><path d="M2 3.5 L5 6.5 L8 3.5" fill="none" stroke="#555" stroke-width="1.2"/></svg>
<div class="a" style="left:98px;top:488px;width:25px;height:12px;background:#d6d6d6"></div>
<svg class="a" style="left:98px;top:488px" width="25" height="13"><path d="M3.5 3 L3.5 9 M8 3 L4.5 6 L8 9 Z" stroke="#aaa" fill="#aaa" stroke-width="1"/><path d="M20 3.5 L17 6 L20 8.5 Z" fill="#aaa"/></svg>
<div class="a" style="left:123px;top:488px;width:35px;height:12px;background:#fff;border:1px solid #aaa;border-top-color:#888"></div>
<div class="t" style="left:126px;top:490px;font-size:8.5px;color:#222">1</div>
<svg class="a" style="left:146px;top:489.5px" width="10" height="10"><path d="M2 3.5 L5 6.5 L8 3.5" fill="none" stroke="#555" stroke-width="1.2"/></svg>
<div class="a" style="left:158px;top:488px;width:26px;height:12px;background:#d6d6d6"></div>
<svg class="a" style="left:158px;top:488px" width="26" height="13"><path d="M5 3.5 L8 6 L5 8.5 Z" fill="#aaa"/><path d="M16 3 L19.5 6 L16 9 Z M21 3 L21 9" stroke="#aaa" fill="#aaa" stroke-width="1"/></svg>
<div class="a" style="left:184px;top:488px;width:139px;height:12px;background:#d0d0d0;border-top:1px solid #b8b8b8"></div>
<div class="t" style="left:213px;top:489.5px;font-size:10px;color:#222">17 次还原: 无重做</div>
<svg class="a" style="left:312px;top:488px" width="10" height="11"><path d="M3 2 L8 5.5 L3 9 Z" fill="#111"/></svg>
<div class="a" style="left:323px;top:488px;width:504px;height:12px;background:#f2f2f2;border-top:1px solid #e0e0e0"></div>
<svg class="a" style="left:325px;top:489.5px" width="8" height="10"><path d="M5.5 2 L2.5 5 L5.5 8" fill="none" stroke="#333" stroke-width="1.3"/></svg>
<div class="a" style="left:562px;top:489.5px;width:13px;height:10px;background:#d0d0d0"></div>
<svg class="a" style="left:805px;top:489.5px" width="8" height="10"><path d="M2.5 2 L5.5 5 L2.5 8" fill="none" stroke="#333" stroke-width="1.3"/></svg>
<div class="a" style="left:812px;top:488px;width:15px;height:12px;background:#fff"></div>
<div class="a" style="left:827px;top:488px;width:1px;height:12px;background:#555"></div>
<div class="a" style="left:828px;top:488px;width:50px;height:12px;background:#d4d4d4"></div>
<div class="t" style="left:836px;top:489.5px;font-size:9px;color:#222">1 个图层</div>
<!-- IME bar -->
<div class="a" style="left:873px;top:487px;width:127px;height:17px;background:#f6f6f6"></div>
<svg class="a" style="left:872px;top:486px" width="128" height="18" viewBox="872 486 128 18">
<path d="M876 489.5 L890 489.5 C892.5 489.5 893.5 491 893 494 L892.5 500 C892 503 890 504 887 504 L873 504 L872.5 496 C872.5 491 873.5 489.5 876 489.5 Z" fill="#28a51c"/>
<path d="M891 492.3 L880.5 492.3 C876 492.3 875.5 497 880.5 497 L885.5 497 C890.5 497 890.5 501.8 885.5 501.8 L875 501.8" fill="none" stroke="#fff" stroke-width="3.4" stroke-linejoin="round"/>
<path d="M891 492.3 L880.5 492.3 C876 492.3 875.5 497 880.5 497 L885.5 497 C890.5 497 890.5 501.8 885.5 501.8 L875 501.8" fill="none" stroke="#28a51c" stroke-width="1.2"/>
<text x="897" y="500" font-family="Liberation Sans" font-size="12" font-weight="bold" fill="#3a4256">英</text>
<path d="M922.5 489 C928 491.5 927.5 500 921 501.5 C918 502.2 915.5 501 914.5 499.5 C920 500 924 494.5 922.5 489 Z" fill="#3a4256"/>
<circle cx="933.5" cy="492.8" r="1.2" fill="#3a4256"/><path d="M939 494.5 L938 498" stroke="#3a4256" stroke-width="1.5"/>
<rect x="949.5" y="491.5" width="12" height="8.5" rx="1" fill="#fff" stroke="#3a4256" stroke-width="1.3"/>
<path d="M951.5 494 L959.5 494 M951.5 496.5 L959.5 496.5" stroke="#3a4256" stroke-width="1" stroke-dasharray="1.2 0.8"/>
<circle cx="971" cy="492.5" r="2.4" fill="#b4c8c4"/><path d="M967 501 C967 496.5 975 496.5 975 501 Z" fill="#b4c8c4"/>
<path d="M986.5 500 L991 495" stroke="#3a4256" stroke-width="2.2" stroke-linecap="round"/><path d="M989.5 494 C989 491 991.5 489 994.5 489.5 L992.5 491.8 L993.5 493 L995.5 491 C996 494 993.5 496 990.5 495.5 Z" fill="#3a4256"/>
</svg>
</body></html>
